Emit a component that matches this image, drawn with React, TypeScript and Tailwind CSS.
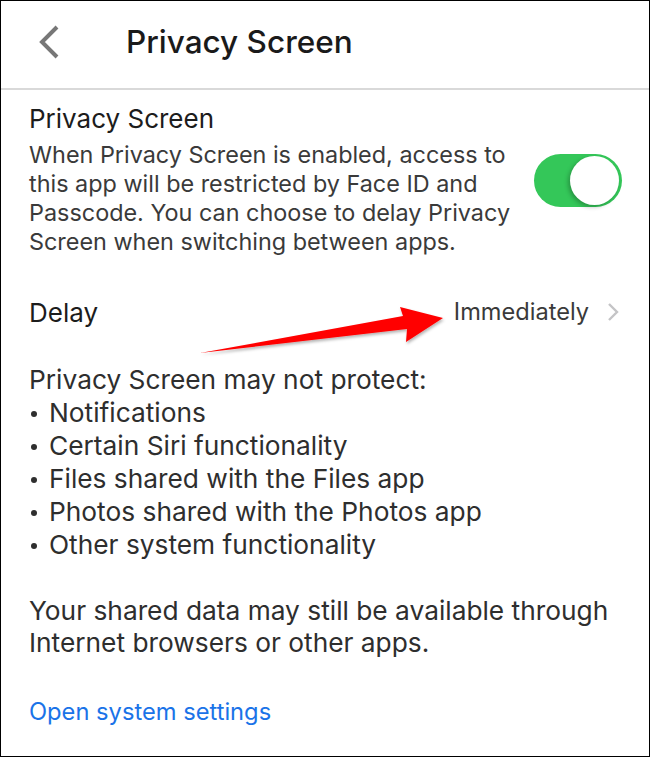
import React from "react";

const font = { fontFamily: "Inter, Roboto, 'Noto Sans', sans-serif" };

const BackChevron = () => (
  <svg width="22" height="34" viewBox="0 0 22 34" fill="none">
    <path d="M19 2 L4 17 L19 32" stroke="#777777" strokeWidth="4" strokeLinecap="butt" strokeLinejoin="miter" />
  </svg>
);

const RowChevron = () => (
  <svg width="12" height="20" viewBox="0 0 12 20" fill="none">
    <path d="M2 2 L10 10 L2 18" stroke="#c4c4c6" strokeWidth="2.4" />
  </svg>
);

const Toggle = () => (
  <div className="relative w-[88px] h-[53px] rounded-full bg-[#34c759] shrink-0">
    <div className="absolute right-[3px] top-[2px] w-[49px] h-[49px] rounded-full bg-white shadow-[-2px_2px_4px_rgba(0,0,0,0.25)]" />
  </div>
);

// red annotation arrow over the delay row
const Arrow = () => (
  <svg className="absolute left-0 top-0 pointer-events-none" width="650" height="757" viewBox="0 0 650 757">
    <defs>
      <filter id="arrowShadow" x="-10%" y="-50%" width="120%" height="200%">
        <feDropShadow dx="1" dy="2" stdDeviation="1.5" floodColor="#000" floodOpacity="0.3" />
      </filter>
    </defs>
    <path
      d="M199 352 L402 315 L399 306 L442 317 L405 341 L406 328 Z"
      fill="#ff0000"
      filter="url(#arrowShadow)"
    />
  </svg>
);

const description = [
  "When Privacy Screen is enabled, access to",
  "this app will be restricted by Face ID and",
  "Passcode. You can choose to delay Privacy",
  "Screen when switching between apps.",
];

const notProtected = [
  "Notifications",
  "Certain Siri functionality",
  "Files shared with the Files app",
  "Photos shared with the Photos app",
  "Other system functionality",
];

export default function App() {
  return (
    <div className="relative w-[650px] h-[757px] bg-white border border-black overflow-hidden" style={font}>
      <header className="h-[87px] pb-[5px] flex items-center">
        <div className="w-[125px] pl-[37px] flex items-center">
          <BackChevron />
        </div>
        <h1 className="text-[31.5px] font-medium text-[#1a1a1a] leading-none">Privacy Screen</h1>
      </header>
      <div className="h-[2px] bg-[#d9d9d9]" />

      <main className="px-[28px]">
        <section className="pt-[14px] flex items-start justify-between">
          <div>
            <h2 className="text-[26px] leading-[30px] text-[#1c1c1c]">Privacy Screen</h2>
            <p className="mt-[6px] text-[23.4px] leading-[29px] text-[#3a3a3a] whitespace-nowrap">
              {description.map((line) => (
                <span key={line} className="block">
                  {line}
                </span>
              ))}
            </p>
          </div>
          <div className="mt-[50px] mr-[-1px]">
            <Toggle />
          </div>
        </section>

        <div className="mt-[41px] h-[30px] flex items-center justify-between">
          <span className="text-[26px] text-[#1c1c1c]">Delay</span>
          <div className="flex items-center gap-[18px] pr-[2px]">
            <span className="text-[23.6px] text-[#3a3a3a]">Immediately</span>
            <RowChevron />
          </div>
        </div>

        <div className="mt-[36px] text-[26.3px] leading-[33px] text-[#2e2e2e] whitespace-nowrap">
          <p>Privacy Screen may not protect:</p>
          <ul>
            {notProtected.map((item) => (
              <li key={item} className="flex items-center">
                <span className="w-[20px] pl-[2px] pt-[3px] flex items-center">
                  <span className="w-[6px] h-[6px] rounded-full bg-[#2e2e2e]" />
                </span>
                <span>{item}</span>
              </li>
            ))}
          </ul>
        </div>

        <p className="mt-[34px] text-[26.3px] leading-[32px] text-[#2e2e2e] whitespace-nowrap">
          Your shared data may still be available through
          <br />
          Internet browsers or other apps.
        </p>

        <a className="block mt-[38px] text-[23.7px] leading-[30px] text-[#1a73e8]">Open system settings</a>
      </main>

      <Arrow />
    </div>
  );
}
